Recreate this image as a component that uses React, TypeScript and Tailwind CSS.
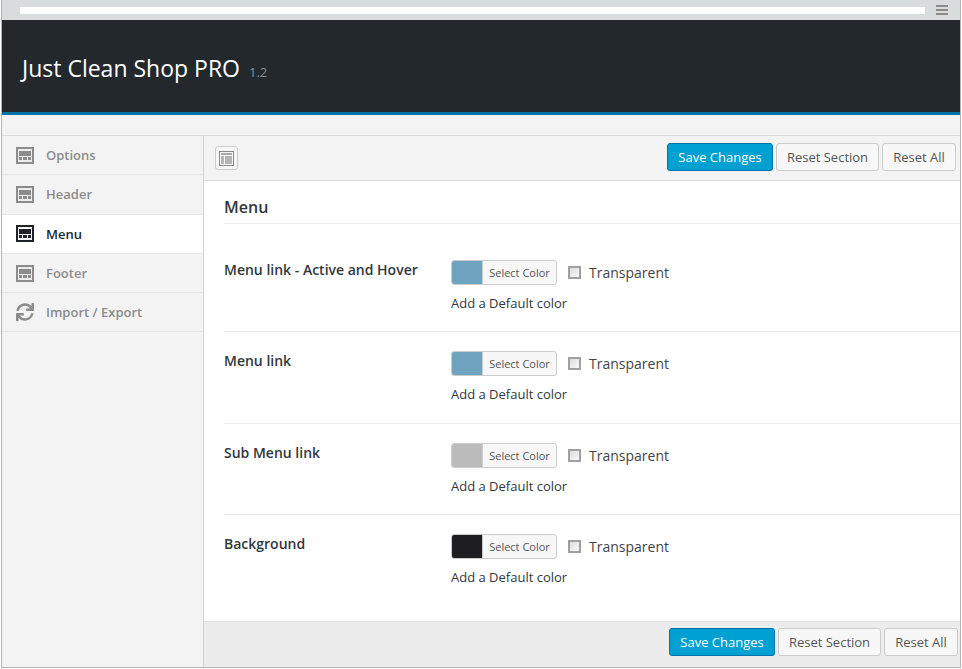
import { FaSync } from "react-icons/fa";

const sideItems = [
  { label: "Options" },
  { label: "Header" },
  { label: "Menu", active: true },
  { label: "Footer" },
  { label: "Import / Export", refresh: true },
];

const fields = [
  { label: "Menu link - Active and Hover", color: "bg-[#6ea4bf]", h: "h-[108px]", pt: "pt-[29px]" },
  { label: "Menu link", color: "bg-[#6ea4bf]", h: "h-[92px]", pt: "pt-[12px]" },
  { label: "Sub Menu link", color: "bg-[#bbbbbb]", h: "h-[91px]", pt: "pt-[12px]" },
  { label: "Background", color: "bg-[#1e1e20]", h: "h-[91px]", pt: "pt-[12px]", last: true },
];

function LayoutIcon({ active }: { active?: boolean }) {
  const c = active ? "#1f2328" : "#8c8c8c";
  const inner = active ? "#f5f5f5" : "#ececec";
  return (
    <svg width="18" height="17" viewBox="0 0 18 17" className="shrink-0">
      <rect x="0" y="0" width="18" height="17" fill={c} />
      <rect x="2" y="2" width="14" height="13" fill={inner} />
      <rect x="3" y="4" width="12" height="5" fill={c} />
      <rect x="3" y="10" width="3" height="3" fill={c} />
      <rect x="7" y="10" width="4" height="3" fill={c} />
      <rect x="12" y="10" width="3" height="3" fill={c} />
    </svg>
  );
}

function Buttons() {
  return (
    <div className="flex items-center gap-[3px] text-[13px] leading-[26px]">
      <button className="h-[28px] w-[106px] rounded-[3px] border border-[#0073aa] bg-[#00a0d2] text-white">
        Save Changes
      </button>
      <button className="h-[28px] w-[103px] rounded-[3px] border border-[#cccccc] bg-[#f7f7f7] text-[#555555]">
        Reset Section
      </button>
      <button className="h-[28px] w-[74px] rounded-[3px] border border-[#cccccc] bg-[#f7f7f7] text-[#555555]">
        Reset All
      </button>
    </div>
  );
}

export default function App() {
  return (
    <div className="w-[962px] h-[669px] overflow-hidden bg-white font-['Open_Sans',sans-serif] text-[#32373c]">
      <div className="h-[668px] ml-[1px] mr-[1px] border-l border-r border-b border-[#b5b5b5] flex flex-col bg-[#f3f3f3]">
        {/* Browser bar */}
        <div className="h-[20px] shrink-0 bg-[#d8dcdc] flex items-center pl-[18px] pr-[12px]">
          <div className="h-[7px] w-[905px] bg-white" />
          <div className="ml-auto flex flex-col gap-[2px]">
            <div className="h-[2px] w-[12px] bg-[#8f8a87]" />
            <div className="h-[2px] w-[12px] bg-[#8f8a87]" />
            <div className="h-[2px] w-[12px] bg-[#8f8a87]" />
          </div>
        </div>

        {/* Header */}
        <div className="h-[95px] shrink-0 bg-[#23282d] border-b-[3px] border-[#0073aa] flex items-baseline pl-[20px] pt-[30px]">
          <span className="text-[23px] leading-[36px] text-white">Just Clean Shop PRO</span>
          <span className="ml-[9px] text-[13px] text-[#8a8f94]">1.2</span>
        </div>

        <div className="h-[21px] shrink-0 border-b border-[#dcdcdc]" />

        <div className="flex-1 flex min-h-0">
          {/* Sidebar */}
          <div className="w-[202px] shrink-0 border-r border-[#d2d2d2]">
            {sideItems.map((item) => (
              <div
                key={item.label}
                className={`h-[39.3px] flex items-center gap-[12px] pl-[14px] border-b border-[#e7e7e7] text-[13px] font-semibold ${
                  item.active ? "bg-white text-[#23282d]" : "text-[#8c8c8c]"
                }`}
              >
                {item.refresh ? (
                  <FaSync size={18} className="shrink-0 text-[#8c8c8c]" />
                ) : (
                  <LayoutIcon active={item.active} />
                )}
                <span className={item.active ? "pt-[3px]" : "pt-[1px]"}>{item.label}</span>
              </div>
            ))}
          </div>

          {/* Main panel */}
          <div className="flex-1 flex flex-col min-w-0">
            <div className="h-[45px] shrink-0 border-b border-[#dcdcdc] flex items-center justify-between pl-[11px] pr-[4px] pb-[2px]">
              <div className="mt-[2px] h-[24px] w-[23px] rounded-[3px] border border-[#cccccc] bg-[#f7f7f7] flex items-center justify-center">
                <svg width="15" height="15" viewBox="0 0 15 15">
                  <rect x="0.5" y="0.5" width="14" height="14" fill="#f7f7f7" stroke="#8a8a8a" />
                  <rect x="2" y="2" width="11" height="2" fill="#a8a8a8" />
                  <rect x="2" y="5" width="3" height="8" fill="#b5b5b5" />
                  <rect x="6" y="5" width="7" height="8" fill="#b5b5b5" />
                </svg>
              </div>
              <Buttons />
            </div>

            <div className="flex-1 bg-white pl-[20px] min-h-0">
              <h2 className="h-[43px] border-b border-[#ececec] text-[16px] font-semibold leading-[52px] text-[#32373c]">
                Menu
              </h2>
              {fields.map((f) => (
                <div
                  key={f.label}
                  className={`${f.h} ${f.pt} flex ${f.last ? "" : "border-b border-[#ececec]"}`}
                >
                  <div className="w-[227px] shrink-0 text-[14px] font-semibold leading-[36px] -mt-[1px] h-[36px]">
                    {f.label}
                  </div>
                  <div>
                    <div className="flex items-center h-[25px] mt-[7px]">
                      <div className="flex h-[25px] w-[106px] rounded-[3px] border border-[#cccccc] bg-[#f7f7f7] overflow-hidden">
                        <div className={`w-[30px] shrink-0 ${f.color}`} />
                        <div className="flex-1 border-l border-[#cccccc] text-center text-[11px] leading-[23px] text-[#555555]">
                          Select Color
                        </div>
                      </div>
                      <div className="ml-[11px] h-[13px] w-[13px] border-2 border-[#a0a0a0] bg-linear-to-br from-[#dcdcdc] to-[#fafafa]" />
                      <span className="ml-[8px] text-[14px] text-[#444444]">Transparent</span>
                    </div>
                    <div className="mt-[8px] text-[13px] leading-[20px] text-[#32373c]">Add a Default color</div>
                  </div>
                </div>
              ))}
            </div>

            <div className="h-[46px] shrink-0 bg-[#ececec] border-t border-[#e2e2e2] flex items-center justify-end pr-[2px] pb-[5px]">
              <Buttons />
            </div>
          </div>
        </div>
      </div>
    </div>
  );
}
